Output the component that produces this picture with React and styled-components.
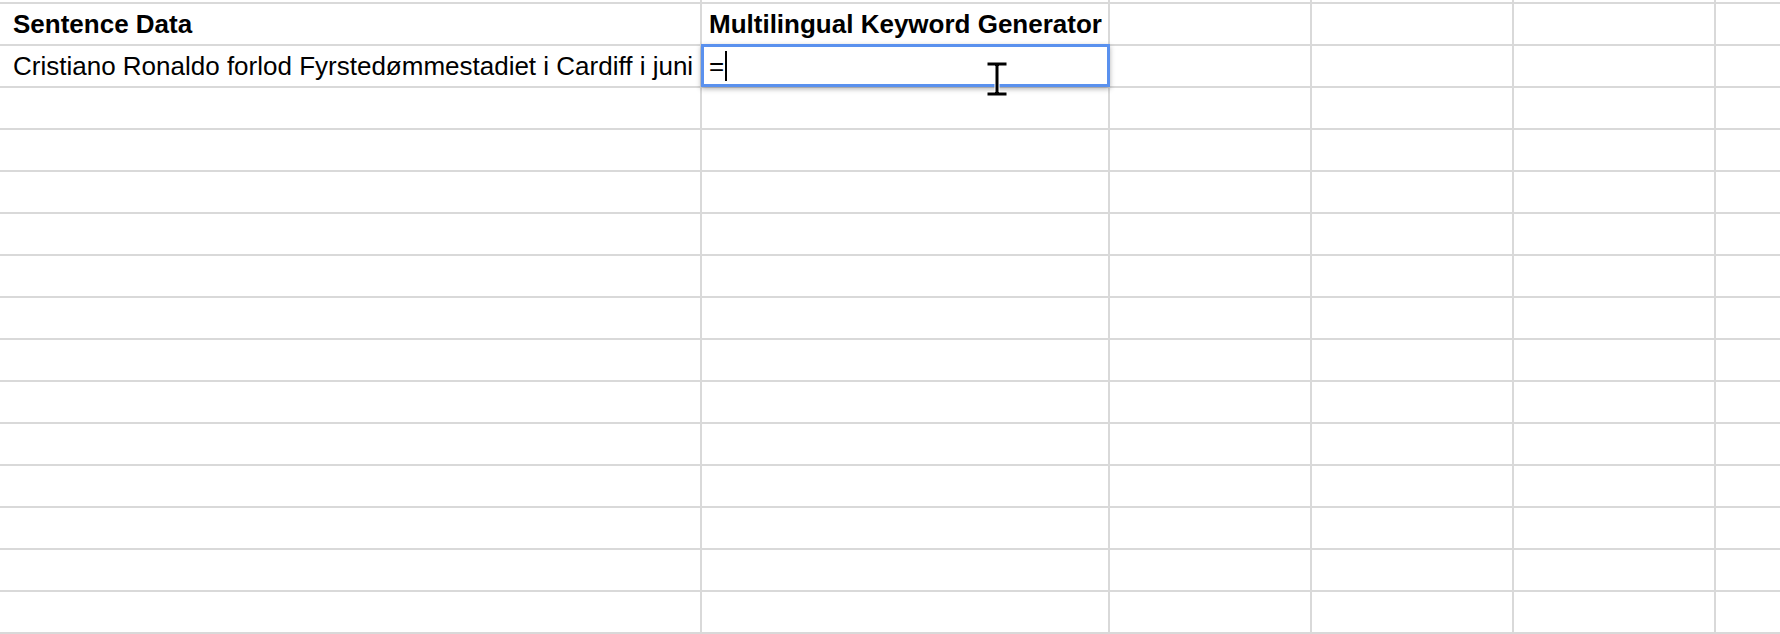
import React from 'react'
import styled, { createGlobalStyle } from 'styled-components'

const Global = createGlobalStyle`
    html, body {
        margin: 0;
        background: #fff;
    }
`

const Sheet = styled.div`
    position: relative;
    display: grid;
    grid-template-columns: 4px 694px 406px repeat(3, 200px) 1fr;
    grid-template-rows: 2px repeat(16, 40px);
    gap: 2px;
    width: 1780px;
    height: 634px;
    overflow: hidden;
    background: #d9d9d9;
    font-family: "Liberation Sans", Arial, sans-serif;
    font-size: 26px;
    color: #000;
`

const Cell = styled.div`
    background: #fff;
    padding: 0 7px;
    line-height: 40px;
    white-space: nowrap;
    font-weight: ${(props) => (props.bold ? 700 : 400)};
`

const Editor = styled.div`
    position: relative;
    z-index: 2;
    margin: -2px -2px -1px -1px;
    padding: 1px 5px 0;
    background: #fff;
    border: 3px solid #5a91ee;
    box-shadow: 0 2px 5px rgba(0, 0, 0, 0.3);
    line-height: 36px;
    white-space: nowrap;
`

const Caret = styled.span`
    display: inline-block;
    width: 2px;
    height: 30px;
    margin: 3px 0 0 1px;
    vertical-align: top;
    background: #000;
`

const MouseBeam = styled.svg`
    position: absolute;
    left: 986px;
    top: 61px;
    z-index: 3;
    pointer-events: none;
`

const COLS = 7
const ROWS = 17

const content = {
    '1-1': { text: 'Sentence Data', bold: true },
    '1-2': { text: 'Multilingual Keyword Generator', bold: true },
    '2-1': { text: 'Cristiano Ronaldo forlod Fyrstedømmestadiet i Cardiff i juni' },
}

const App = () => {
    const cells = []
    for (let r = 0; r < ROWS; r++) {
        for (let c = 0; c < COLS; c++) {
            const key = r + '-' + c
            if (key === '2-2') {
                cells.push(
                    <Editor key={key}>
                        =<Caret />
                    </Editor>
                )
                continue
            }
            const item = content[key]
            cells.push(
                <Cell key={key} bold={item && item.bold}>
                    {item ? item.text : ''}
                </Cell>
            )
        }
    }

    return (
        <>
            <Global />
            <Sheet>
                {cells}
                <MouseBeam width="22" height="36" viewBox="0 0 22 36">
                    <path
                        d="M1 1h20v4h-8v26h8v4H1v-4h8V5H1z"
                        fill="#000"
                        stroke="#fff"
                        strokeWidth="1"
                    />
                </MouseBeam>
            </Sheet>
        </>
    )
}

export default App
